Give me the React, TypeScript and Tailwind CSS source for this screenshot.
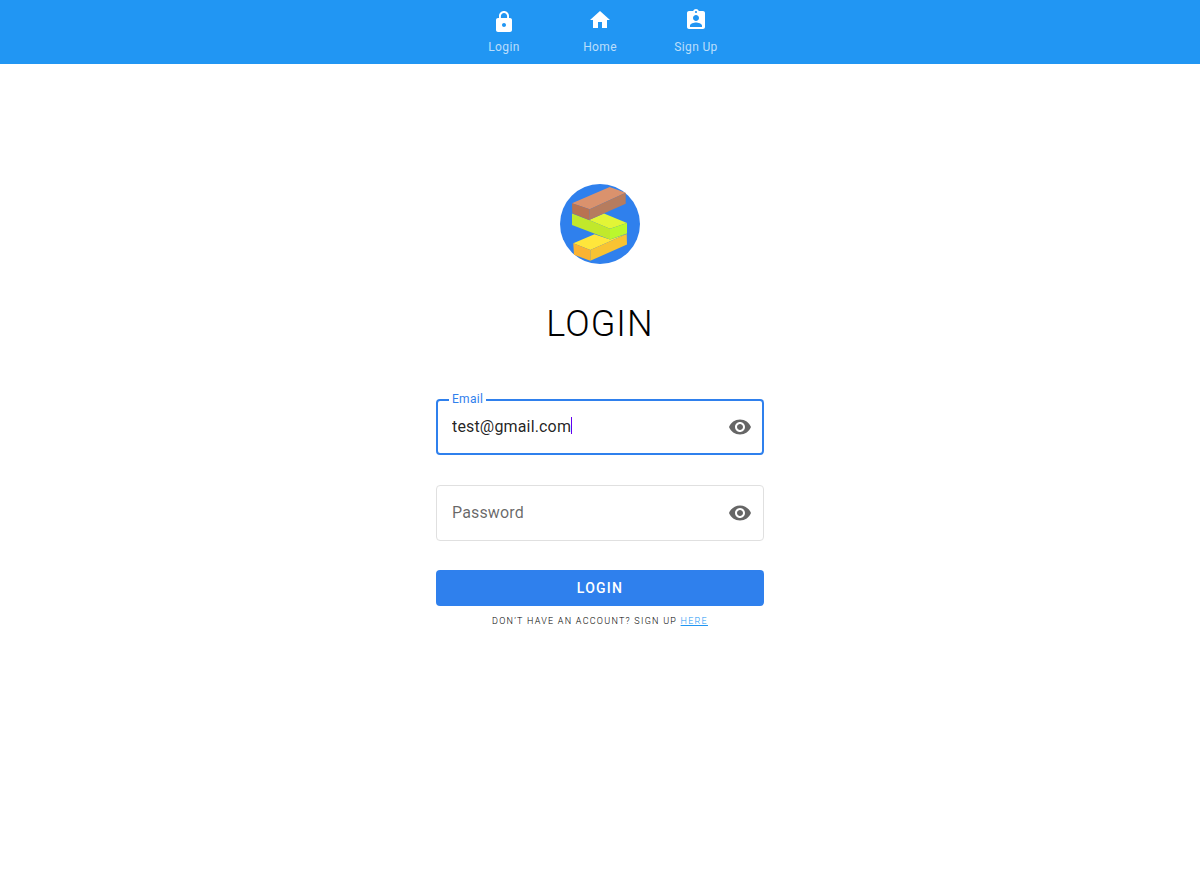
import { useState } from "react";
import type { ReactNode } from "react";

function Icon({ d, className }: { d: string; className: string }) {
  return (
    <svg viewBox="0 0 24 24" className={className} fill="currentColor" aria-hidden="true">
      <path d={d} />
    </svg>
  );
}

const lockPath =
  "M18 8h-1V6c0-2.760-2.240-5-5-5S7 3.240 7 6v2H6c-1.100 0-2 .9-2 2v10c0 1.100.9 2 2 2h12c1.100 0 2-.9 2-2V10c0-1.100-.9-2-2-2zm-6 9c-1.100 0-2-.9-2-2s.9-2 2-2 2 .9 2 2-.9 2-2 2zm3.100-9H8.900V6c0-1.710 1.390-3.100 3.100-3.100s3.100 1.390 3.100 3.100v2z";
const homePath = "M10 20v-6h4v6h5v-8h3L12 3 2 12h3v8z";
const badgePath =
  "M19 3h-4.180C14.400 1.840 13.300 1 12 1s-2.400.84-2.820 2H5c-1.100 0-2 .9-2 2v14c0 1.100.9 2 2 2h14c1.100 0 2-.9 2-2V5c0-1.100-.9-2-2-2zm-7 0c.55 0 1 .45 1 1s-.45 1-1 1-1-.45-1-1 .45-1 1-1zm0 4c1.660 0 3 1.340 3 3s-1.340 3-3 3-3-1.340-3-3 1.340-3 3-3zm6 12H6v-1.400c0-2 4-3.100 6-3.100s6 1.100 6 3.100V19z";
const eyePath =
  "M12 4.500C7 4.500 2.730 7.610 1 12c1.730 4.390 6 7.500 11 7.500s9.270-3.110 11-7.500c-1.730-4.390-6-7.500-11-7.500zM12 17c-2.760 0-5-2.240-5-5s2.240-5 5-5 5 2.240 5 5-2.240 5-5 5zm0-8c-1.660 0-3 1.340-3 3s1.340 3 3 3 3-1.340 3-3-1.340-3-3-3z";

function NavItem({ label, children }: { label: string; children: ReactNode }) {
  return (
    <a href="#" className="flex w-24 flex-col items-center justify-between pt-2 pb-2 text-white">
      {children}
      <span className="text-xs leading-[18px] tracking-[0.03em] text-white/70">{label}</span>
    </a>
  );
}

function Logo() {
  return (
    <svg viewBox="0 0 80 80" className="size-20" role="img" aria-label="Stacked blocks">
      <circle cx="40" cy="40" r="40" fill="#2f80ed" />
      <path d="M13.300 59.300 34.500 50.300 50 55.500 66.700 50 30.300 66z" fill="#ffe63b" />
      <path d="M13.300 59.300 30.300 66V76.800L14 70.700z" fill="#fbb332" />
      <path d="M30.300 66 66.700 50 67 60.500 30.300 76.800z" fill="#f8c333" />
      <path d="M29 36 44 29.500 67 39 50 44.800z" fill="#e3f536" />
      <path d="M12 29.500 29 36 50 44.800V55.400L12 41z" fill="#c1e82b" />
      <path d="M50 44.800 67 39V49.500L50 55.400z" fill="#bbf82d" />
      <path d="M12 19.300 49.700 3 65.700 8.700 29.700 25.300z" fill="#da926d" />
      <path d="M12 19.300 29.700 25.300 29 36 12.300 29.300z" fill="#b87352" />
      <path d="M29.700 25.300 65.700 8.700V19.700L29 36z" fill="#b67c5e" />
    </svg>
  );
}

function EyeButton({ label, onClick }: { label: string; onClick?: () => void }) {
  return (
    <button type="button" aria-label={label} onClick={onClick} className="mr-2.5 text-[#666]">
      <Icon d={eyePath} className="size-6" />
    </button>
  );
}

export default function App() {
  const [email, setEmail] = useState("test@gmail.com");
  const [password, setPassword] = useState("");
  const [visible, setVisible] = useState(false);

  return (
    <div className="min-h-screen bg-white font-['Roboto',sans-serif]">
      <nav className="flex h-16 justify-center bg-[#2196f3]">
        <NavItem label="Login">
          <Icon d={lockPath} className="mt-0.5 size-6" />
        </NavItem>
        <NavItem label="Home">
          <Icon d={homePath} className="size-6" />
        </NavItem>
        <NavItem label="Sign Up">
          <Icon d={badgePath} className="size-6" />
        </NavItem>
      </nav>

      <main className="mx-auto flex w-full max-w-[328px] flex-col items-center pt-30">
        <Logo />
        <h1 className="mt-9 text-4xl leading-12 font-light tracking-[0.03em] text-black">LOGIN</h1>

        <form className="mt-[51px] flex w-full flex-col" onSubmit={(e) => e.preventDefault()}>
          <div className="relative flex h-14 items-center rounded border-2 border-[#2f80ed]">
            <label
              htmlFor="email"
              className="absolute -top-2.5 left-[11px] bg-white px-[3px] text-xs leading-4 tracking-wide text-[#2f80ed]"
            >
              Email
            </label>
            <input
              id="email"
              type="email"
              value={email}
              onChange={(e) => setEmail(e.target.value)}
              className="min-w-0 flex-1 bg-transparent pl-3.5 text-base tracking-[0.01em] text-black/87 outline-none"
            />
            <span className="absolute top-4 left-[133px] h-[17px] w-px bg-[#6200ee]" />
            <EyeButton label="Toggle email visibility" />
          </div>

          <div className="mt-[30px] flex h-14 items-center rounded border border-[#e0e0e0] px-px">
            <input
              id="password"
              type={visible ? "text" : "password"}
              aria-label="Password"
              placeholder="Password"
              value={password}
              onChange={(e) => setPassword(e.target.value)}
              className="min-w-0 flex-1 bg-transparent pl-3.5 text-base tracking-[0.01em] text-black/87 outline-none placeholder:text-black/60"
            />
            <EyeButton label="Toggle password visibility" onClick={() => setVisible(!visible)} />
          </div>

          <button
            type="submit"
            className="mt-[29px] h-9 rounded bg-[#2f80ed] text-sm font-medium tracking-[0.09em] text-white"
          >
            LOGIN
          </button>
        </form>

        <p className="mt-[7px] text-[9px] leading-4 font-light tracking-[0.14em] text-black">
          DON’T HAVE AN ACCOUNT? SIGN UP{" "}
          <a href="#" className="text-[#2196f3] underline">
            HERE
          </a>
        </p>
      </main>
    </div>
  );
}
